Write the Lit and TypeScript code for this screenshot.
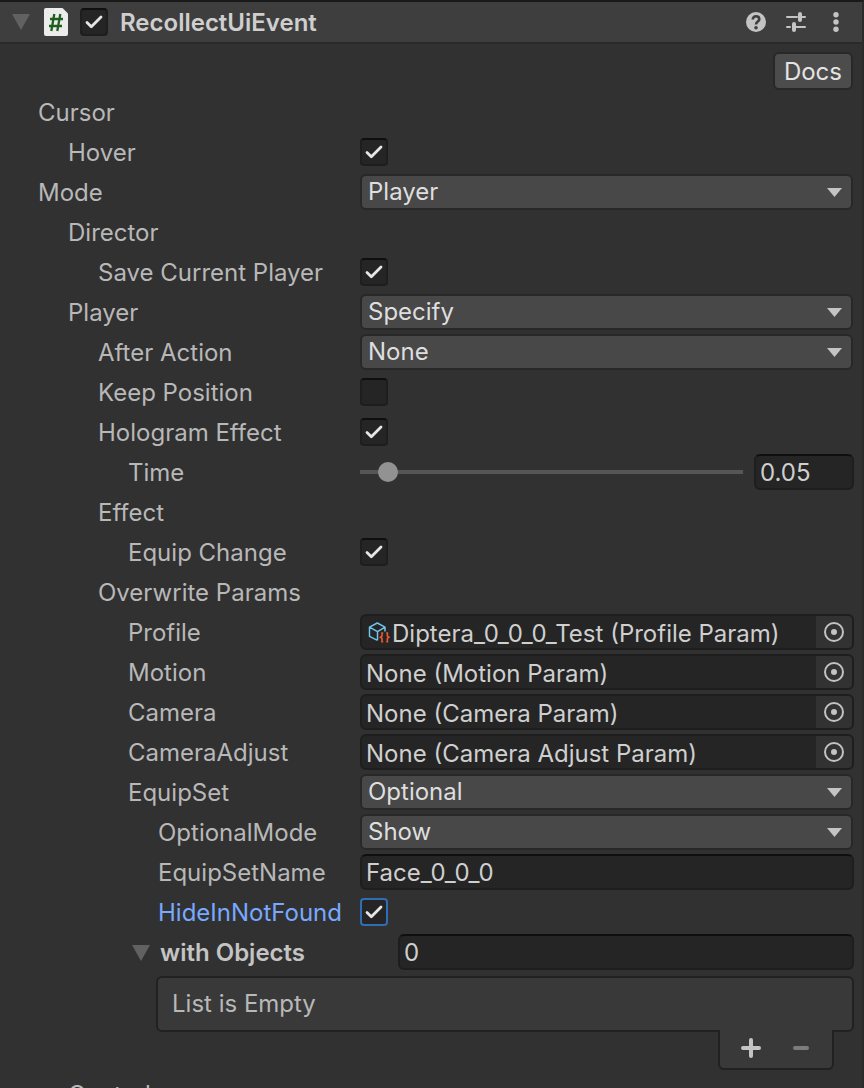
import { LitElement, html, css, nothing, TemplateResult } from "lit";
import { customElement } from "lit/decorators.js";
import { classMap } from "lit/directives/class-map.js";

const check = html`<svg class="tick" viewBox="0 0 28 28" aria-hidden="true">
  <path d="M7 14.5L11.3 18.7L21 9" fill="none" stroke="#e6e6e6" stroke-width="2.8" stroke-linecap="round" stroke-linejoin="round" />
</svg>`;

const triangle = html`<svg width="18" height="16" viewBox="0 0 18 16" aria-hidden="true">
  <path d="M0 0H18L9 16Z" fill="#616161" />
</svg>`;

const target = html`<svg width="20" height="20" viewBox="0 0 20 20" aria-hidden="true">
  <circle cx="10" cy="10" r="9" fill="none" stroke="#c2c2c2" stroke-width="2" />
  <circle cx="10" cy="10" r="3" fill="#c2c2c2" />
</svg>`;

const assetIcon = html`<svg class="asset" width="22" height="22" viewBox="0 0 22 22" fill="none" aria-hidden="true">
  <path d="M9.5 19.3L1.5 15.3V6.2L9.3 2L17 6.2V10.5M1.5 6.2L9.5 10.6L17 6.2M9.5 10.6V19.3" stroke="#6fc3ec" stroke-width="1.5" stroke-linejoin="round" />
  <path d="M15.2 12H14V15.2L12.4 16.3L14 17.4V20.8H15.2M18.2 12H19.4V15.2L21 16.3L19.4 17.4V20.8H18.2" stroke="#f0592b" stroke-width="1.6" />
</svg>`;

@customElement("app-root")
export class AppRoot extends LitElement {
  static styles = css`
    :host {
      display: block;
      box-sizing: border-box;
      height: 100vh;
      overflow: hidden;
      background: #313131;
      border-top: 2px solid #191919;
      border-right: 2px solid #2a2a2a;
      color: #b8b8b8;
      font: 375 24px/36px Inter, sans-serif;
    }
    * {
      box-sizing: border-box;
    }
    button, input, select {
      font: inherit;
      margin: 0;
      border-radius: 6px;
      outline: none;
    }
    svg {
      display: block;
      flex: none;
    }
    .header {
      display: flex;
      align-items: center;
      height: 42px;
      padding: 0 16px 0 12px;
      background: #3e3e3e;
      border-bottom: 2px solid #2a2a2a;
    }
    .title {
      flex: 1;
      margin: 0 0 0 12px;
      padding-top: 2px;
      font-size: 24px;
      font-weight: 600;
      color: #cfcfcf;
    }
    .script {
      margin: 0 12px 0 14px;
    }
    .icon {
      display: grid;
      place-items: center;
      padding: 0;
      border: 0;
      background: none;
    }
    .tools {
      display: flex;
      gap: 20px;
    }
    .tools .icon {
      width: 20px;
      height: 20px;
    }
    .toolbar {
      display: flex;
      justify-content: flex-end;
      height: 48px;
      padding: 8px 9px 0 0;
    }
    .docs {
      height: 38px;
      padding: 2px 9px 0;
      border: 2px solid #282828;
      background: #4c4c4c;
      color: #e4e4e4;
      line-height: 32px;
    }
    .row {
      display: grid;
      grid-template-columns: 360px minmax(0, 1fr);
      align-items: center;
      height: 40px;
      padding-right: 8px;
    }
    .label {
      padding-top: 2px;
      white-space: nowrap;
    }
    .l0 { padding-left: 38px; }
    .l1 { padding-left: 68px; }
    .l2 { padding-left: 98px; }
    .l3 { padding-left: 128px; }
    .l4 { padding-left: 158px; }
    .active {
      color: #78a9ff;
    }
    .box {
      position: relative;
      width: 28px;
      height: 28px;
      flex: none;
    }
    .box input {
      appearance: none;
      display: block;
      width: 28px;
      height: 28px;
      border: 2px solid #1e1e1e;
      border-top-color: #0f0f0f;
      border-radius: 4px;
      background: #252525;
    }
    .box.focus input {
      border-color: #2f6db5;
    }
    .tick {
      position: absolute;
      inset: 0;
      visibility: hidden;
      pointer-events: none;
    }
    input:checked + .tick {
      visibility: visible;
    }
    .drop {
      position: relative;
      display: flex;
      align-items: center;
      margin-right: 1px;
    }
    .drop select {
      appearance: none;
      width: 100%;
      height: 36px;
      padding: 0 40px 0 6px;
      border: 2px solid #282828;
      background: #484848;
      color: #dedede;
      line-height: 32px;
    }
    .drop svg {
      position: absolute;
      right: 11px;
      pointer-events: none;
    }
    .text {
      width: 100%;
      height: 36px;
      padding: 1px 4px 0;
      border: 2px solid #1e1e1e;
      border-top-color: #0f0f0f;
      background: #252525;
      color: #cfcfcf;
      line-height: 30px;
    }
    .slider {
      display: grid;
      grid-template-columns: minmax(0, 1fr) 100px;
      gap: 11px;
      align-items: center;
    }
    .range {
      appearance: none;
      width: 100%;
      height: 20px;
      background: linear-gradient(#565656, #565656) center / 100% 4px no-repeat;
      border-radius: 0;
    }
    .range::-webkit-slider-thumb {
      appearance: none;
      width: 20px;
      height: 20px;
      border-radius: 50%;
      background: #929292;
    }
    .object {
      display: flex;
      align-items: center;
      height: 36px;
      border: 2px solid #1e1e1e;
      border-radius: 6px;
      background: #252525;
      color: #cfcfcf;
      overflow: hidden;
    }
    .object .name {
      flex: 1;
      padding: 4px 0 0 4px;
      white-space: nowrap;
    }
    .object .asset {
      margin-left: 6px;
    }
    .object .asset + .name {
      padding-left: 2px;
    }
    .object .icon {
      width: 36px;
      height: 32px;
      border-radius: 0;
      background: #323232;
    }
    .fold {
      display: flex;
      align-items: center;
      gap: 10px;
      padding: 2px 0 0 132px;
      border: 0;
      background: none;
      color: #c4c4c4;
      font-weight: 600;
      white-space: nowrap;
    }
    .count {
      padding-left: 38px;
    }
    .list {
      padding: 4px 8px 0 156px;
    }
    .empty {
      height: 56px;
      padding: 0 14px;
      border: 2px solid #212121;
      border-radius: 6px;
      background: #393939;
      line-height: 52px;
    }
    .footer {
      position: relative;
      display: flex;
      justify-content: space-between;
      width: 116px;
      height: 40px;
      margin: -2px 20px 0 auto;
      padding: 0 20px;
      border: 2px solid #212121;
      border-top: 0;
      border-radius: 0 0 6px 6px;
      background: #393939;
    }
    .footer .icon {
      width: 22px;
      height: 36px;
    }
    .after {
      padding-top: 4px;
    }
  `;

  private row(level: number, label: string, control: TemplateResult | typeof nothing = nothing, id = "", active = false) {
    const cls = classMap({ label: true, [`l${level}`]: true, active });
    return html`<div class="row">
      ${id ? html`<label class=${cls} for=${id}>${label}</label>` : html`<span class=${cls}>${label}</span>`}
      ${control}
    </div>`;
  }

  private toggle(level: number, label: string, id: string, on = true, focus = false) {
    return this.row(level, label,
      html`<span class=${classMap({ box: true, focus })}><input type="checkbox" id=${id} ?checked=${on} />${check}</span>`,
      id, focus);
  }

  private drop(level: number, label: string, id: string, value: string) {
    return this.row(level, label,
      html`<span class="drop"><select id=${id}><option>${value}</option></select>
        <svg width="15" height="9" viewBox="0 0 15 9" aria-hidden="true"><path d="M0 0H15L7.5 9Z" fill="#c4c4c4" /></svg></span>`,
      id);
  }

  private object(label: string, value: string, asset = false) {
    return this.row(3, label,
      html`<div class="object">${asset ? assetIcon : nothing}<span class="name">${value}</span>
        <button class="icon" aria-label="Select ${label}">${target}</button></div>`);
  }

  render() {
    return html`
      <header class="header">
        <button class="icon" aria-label="Collapse">${triangle}</button>
        <svg class="script" width="24" height="28" viewBox="0 0 24 28" aria-hidden="true">
          <path d="M2 0H18.5L24 5.5V26Q24 28 22 28H2Q0 28 0 26V2Q0 0 2 0Z" fill="#ececec" />
          <path d="M10.3 6L7.3 23M16.3 6L13.3 23M6 11H19M5 18H18" stroke="#1e5f20" stroke-width="2.3" fill="none" />
        </svg>
        <span class="box"><input type="checkbox" id="enabled" checked aria-label="Enabled" />${check}</span>
        <h1 class="title">RecollectUiEvent</h1>
        <div class="tools">
          <button class="icon" aria-label="Help">
            <svg width="20" height="20" viewBox="0 0 20 20">
              <circle cx="10" cy="10" r="10" fill="#c4c4c4" />
              <path d="M6.8 7.6C6.8 5.4 8.2 4.2 10 4.2S13.3 5.3 13.3 7.2C13.3 9.5 10 9.7 10 12.6" fill="none" stroke="#3e3e3e" stroke-width="2.6" />
              <circle cx="10" cy="15.7" r="1.8" fill="#3e3e3e" />
            </svg>
          </button>
          <button class="icon" aria-label="Presets">
            <svg width="20" height="20" viewBox="0 0 20 20" fill="none" stroke="#c4c4c4" stroke-linecap="round">
              <path d="M1 5H11M15 5H19M1 15H4M9 15H19" stroke-width="2" />
              <path d="M14 2V8M8 12V18" stroke-width="4" />
            </svg>
          </button>
          <button class="icon" aria-label="More">
            <svg width="6" height="20" viewBox="0 0 6 20" fill="#c4c4c4">
              <circle cx="3" cy="2.7" r="2.7" /><circle cx="3" cy="10" r="2.7" /><circle cx="3" cy="17.3" r="2.7" />
            </svg>
          </button>
        </div>
      </header>
      <div class="toolbar"><button class="docs">Docs</button></div>
      <main>
        ${this.row(0, "Cursor")}
        ${this.toggle(1, "Hover", "hover")}
        ${this.drop(0, "Mode", "mode", "Player")}
        ${this.row(1, "Director")}
        ${this.toggle(2, "Save Current Player", "save")}
        ${this.drop(1, "Player", "player", "Specify")}
        ${this.drop(2, "After Action", "after", "None")}
        ${this.toggle(2, "Keep Position", "keep", false)}
        ${this.toggle(2, "Hologram Effect", "hologram")}
        ${this.row(3, "Time", html`<div class="slider">
          <input class="range" type="range" id="time" min="0" max="1" step="0.01" value="0.05" />
          <input class="text" type="text" aria-label="Time value" value="0.05" /></div>`, "time")}
        ${this.row(2, "Effect")}
        ${this.toggle(3, "Equip Change", "equip")}
        ${this.row(2, "Overwrite Params")}
        ${this.object("Profile", "Diptera_0_0_0_Test (Profile Param)", true)}
        ${this.object("Motion", "None (Motion Param)")}
        ${this.object("Camera", "None (Camera Param)")}
        ${this.object("CameraAdjust", "None (Camera Adjust Param)")}
        ${this.drop(3, "EquipSet", "equipset", "Optional")}
        ${this.drop(4, "OptionalMode", "optional", "Show")}
        ${this.row(4, "EquipSetName", html`<input class="text" type="text" id="setname" value="Face_0_0_0" />`, "setname")}
        ${this.toggle(4, "HideInNotFound", "hide", true, true)}
        <div class="row">
          <button class="fold">${triangle}with Objects</button>
          <div class="count"><input class="text" type="text" aria-label="with Objects size" value="0" /></div>
        </div>
        <div class="list">
          <div class="empty">List is Empty</div>
          <div class="footer">
            <button class="icon" aria-label="Add">
              <svg width="20" height="20" viewBox="0 0 20 20"><path d="M2 10H18M10 2V18" stroke="#c4c4c4" stroke-width="4" stroke-linecap="round" /></svg>
            </button>
            <button class="icon" aria-label="Remove">
              <svg width="20" height="20" viewBox="0 0 20 20"><path d="M4 10H16" stroke="#7c7c7c" stroke-width="4" stroke-linecap="round" /></svg>
            </button>
          </div>
        </div>
        <div class="after">${this.row(1, "Control")}</div>
      </main>
    `;
  }
}
